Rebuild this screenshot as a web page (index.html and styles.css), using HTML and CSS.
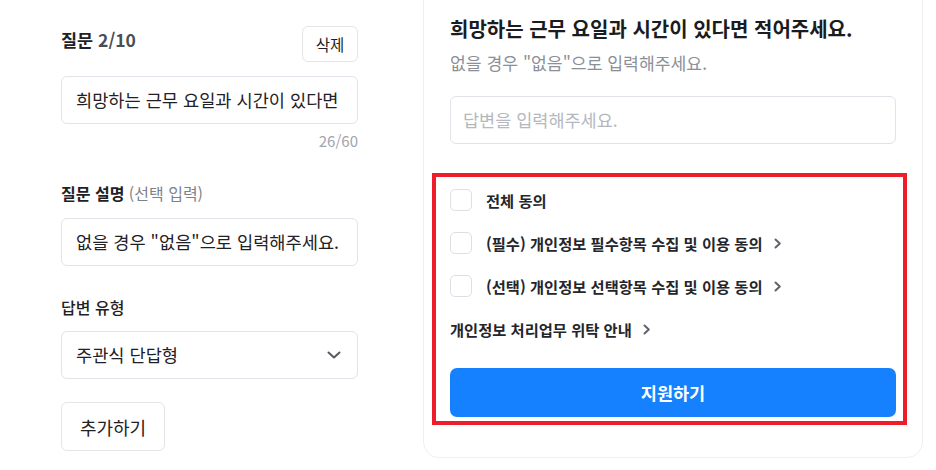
FILE: index.html
```html
<!DOCTYPE html>
<html lang="ko">
<head>
<meta charset="utf-8">
<link rel="stylesheet" href="styles.css">
</head>
<body>
<div class="page">
  <div class="editor">
    <div class="q-head">
      <div class="q-title">질문 <span class="q-num">2/10</span></div>
      <button class="btn-outline btn-del">삭제</button>
    </div>
    <div class="field"><span class="field-text">희망하는 근무 요일과 시간이 있다면 적어주세요.</span></div>
    <div class="counter">26/60</div>
    <div class="label label-desc">질문 설명 <span class="optional">(선택 입력)</span></div>
    <div class="field"><span class="field-text">없을 경우 "없음"으로 입력해주세요.</span></div>
    <div class="label label-type">답변 유형</div>
    <div class="field select">
      <span>주관식 단답형</span>
      <svg class="select-caret" width="14" height="8" viewBox="0 0 14 8"><path d="M1.5 1.5 L7 6.5 L12.5 1.5" fill="none" stroke="#555a63" stroke-width="2" stroke-linecap="round" stroke-linejoin="round"/></svg>
    </div>
    <button class="btn-outline btn-add">추가하기</button>
  </div>

  <div class="preview">
    <div class="p-title">희망하는 근무 요일과 시간이 있다면 적어주세요.</div>
    <div class="p-sub">없을 경우 "없음"으로 입력해주세요.</div>
    <div class="answer">답변을 입력해주세요.</div>

    <div class="agree">
      <div class="agree-row"><span class="check"></span><span class="agree-text">전체 동의</span></div>
      <div class="agree-row"><span class="check"></span><span class="agree-text">(필수) 개인정보 필수항목 수집 및 이용 동의</span>
        <svg class="more" width="8" height="11" viewBox="0 0 8 11"><path d="M1.5 1.5 L5.8 5.5 L1.5 9.5" fill="none" stroke="#5f636b" stroke-width="2" stroke-linecap="round" stroke-linejoin="round"/></svg></div>
      <div class="agree-row"><span class="check"></span><span class="agree-text">(선택) 개인정보 선택항목 수집 및 이용 동의</span>
        <svg class="more" width="8" height="11" viewBox="0 0 8 11"><path d="M1.5 1.5 L5.8 5.5 L1.5 9.5" fill="none" stroke="#5f636b" stroke-width="2" stroke-linecap="round" stroke-linejoin="round"/></svg></div>
      <div class="agree-row"><span class="agree-text">개인정보 처리업무 위탁 안내</span>
        <svg class="more" width="8" height="11" viewBox="0 0 8 11"><path d="M1.5 1.5 L5.8 5.5 L1.5 9.5" fill="none" stroke="#5f636b" stroke-width="2" stroke-linecap="round" stroke-linejoin="round"/></svg></div>
      <button class="apply">지원하기</button>
    </div>
  </div>
</div>
</body>
</html>
```

FILE: styles.css
```css
* { box-sizing: border-box; }
html, body { margin: 0; padding: 0; background: #fff; }
body {
  font-family: "Noto Sans CJK KR", "Noto Sans", sans-serif;
  color: #1f2126;
  overflow: hidden;
  height: 470px;
}
.page {
  display: flex;
  align-items: flex-start;
}
.editor {
  width: 297px;
  margin-left: 61px;
  margin-top: 26px;
  display: flex;
  flex-direction: column;
}
.q-head {
  display: flex;
  justify-content: space-between;
  align-items: flex-start;
  height: 36px;
}
.q-title {
  font-size: 17.5px;
  font-weight: 600;
  line-height: 28px;
  color: #1f2126;
}
.q-num { color: #4a4e55; }
.btn-outline {
  font-family: inherit;
  background: #fff;
  border: 1px solid #e3e5e9;
  border-radius: 6px;
  color: #1f2126;
  padding: 0;
  cursor: pointer;
}
.btn-del {
  width: 56px;
  height: 36px;
  font-size: 15.5px;
}
.field {
  margin-top: 14px;
  height: 48px;
  border: 1px solid #e1e3e8;
  border-radius: 6px;
  padding: 0 15px 0 14px;
  font-size: 17.6px;
  line-height: 46px;
  color: #1f2126;
}
.field-text {
  display: block;
  white-space: nowrap;
  overflow: hidden;
}
.counter {
  margin-top: 6px;
  text-align: right;
  font-size: 15px;
  line-height: 22px;
  color: #a1a5ab;
}
.label {
  font-size: 16px;
  font-weight: 600;
  line-height: 24px;
  color: #1f2126;
}
.label-desc { margin-top: 29px; }
.label-desc + .field { margin-top: 13px; }
.optional { font-weight: 400; color: #7d828a; }
.label-type { margin-top: 29px; font-weight: 500; }
.field.select {
  margin-top: 12px;
  display: flex;
  justify-content: space-between;
  align-items: center;
}
.select-caret { margin-right: 1px; }
.btn-add {
  margin-top: 23px;
  width: 104px;
  height: 49px;
  font-size: 18px;
}

.preview {
  margin-left: 65px;
  margin-top: -20px;
  width: 500px;
  border: 1px solid #efeff1;
  border-radius: 16px;
  padding: 35px 26px 40px;
}
.p-title {
  font-size: 20px;
  font-weight: 700;
  line-height: 26px;
  color: #1a1c20;
}
.p-sub {
  margin-top: 9px;
  font-size: 17.2px;
  line-height: 24px;
  color: #8b9098;
}
.answer {
  margin-top: 21px;
  height: 48px;
  border: 1px solid #e1e3e8;
  border-radius: 6px;
  padding: 0 12px;
  font-size: 17.5px;
  line-height: 46px;
  color: #b4b8be;
}
.agree {
  position: relative;
  margin-top: 45px;
  display: flex;
  flex-direction: column;
  gap: 21px;
}
.agree::after {
  content: "";
  position: absolute;
  top: -16px;
  left: -18px;
  right: -11px;
  bottom: -8px;
  border: 4px solid #ee1d2a;
  pointer-events: none;
}
.agree-row {
  display: flex;
  align-items: center;
  height: 22px;
}
.check {
  width: 22px;
  height: 22px;
  border: 1px solid #dcdfe4;
  border-radius: 5px;
  margin-right: 14px;
  flex: none;
}
.agree-text {
  font-size: 15.3px;
  font-weight: 600;
  color: #24262b;
  line-height: 22px;
}
.more { margin-left: 11px; }
.apply {
  margin-top: 7px;
  height: 49px;
  width: 100%;
  border: none;
  border-radius: 7px;
  background: #1581ff;
  color: #fff;
  font-family: inherit;
  font-size: 17.5px;
  font-weight: 700;
  cursor: pointer;
}
```
